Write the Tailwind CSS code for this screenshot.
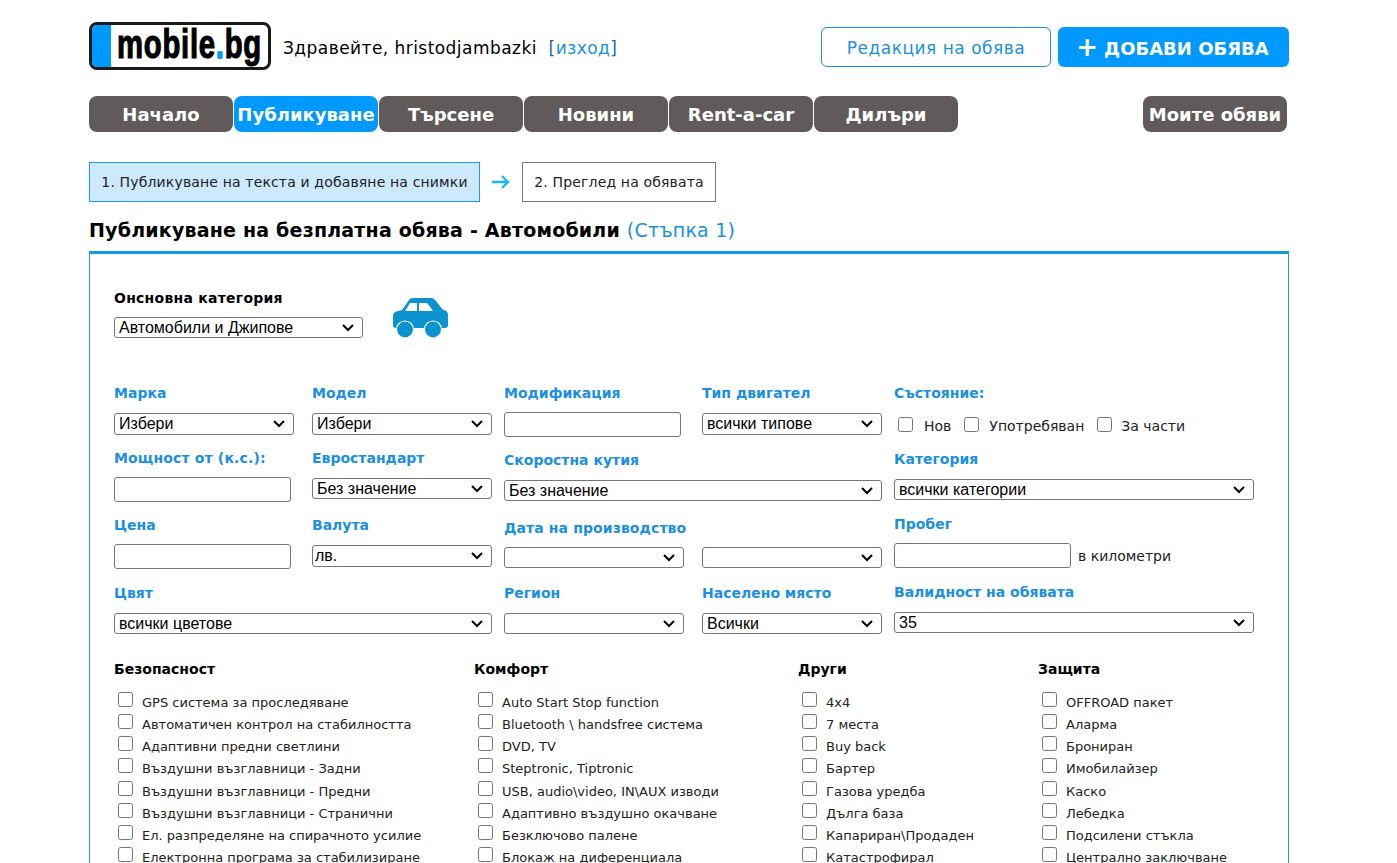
<!DOCTYPE html>
<html lang="en">
<head>
    <meta charset="utf-8"/>
    <title>Публикуване на обява - mobile.bg</title>
    <script src="https://cdn.jsdelivr.net/npm/@tailwindcss/browser@4"></script>
</head>
<body class="bg-white font-['DejaVu_Sans',Verdana,sans-serif] text-black">
<div class="h-[863px] overflow-hidden">
<div class="w-[1200px] ml-[89px]">

    <!-- header -->
    <header class="flex items-start h-[96px]">
        <div class="mt-[22px] w-[182px] h-[48px] border-[3px] border-[#1a1a1a] rounded-[8px] overflow-hidden flex relative">
            <div class="w-[19px] bg-[#0099ff] shrink-0"></div>
            <span class="absolute left-[25px] top-[-6px] origin-left scale-x-[0.715] font-['Liberation_Sans',sans-serif] font-bold text-[41px] leading-[50px] tracking-[1px] whitespace-nowrap [-webkit-text-stroke:1.2px_black]">mobile<span class="text-[#0099ff] [-webkit-text-stroke:1.5px_#0099ff]">.</span>bg</span>
        </div>
        <div class="mt-[37px] ml-[12px] text-[17px] leading-[22px] tracking-[0.45px]">Здравейте, hristodjambazki&nbsp; <span class="text-[#1b6a9c]">[</span><a class="text-[#1a8fe3]">изход</a><span class="text-[#1b6a9c]">]</span></div>
        <a class="mt-[27px] ml-auto w-[230px] h-[40px] pt-[3px] border border-[#1a8fe3] rounded-[6px] text-[#1a8fe3] text-[17px] tracking-[0.5px] flex items-center justify-center">Редакция на обява</a>
        <a class="mt-[27px] ml-[7px] w-[231px] h-[40px] pt-[2px] pr-[2px] bg-[#0099ff] rounded-[6px] text-white text-[18px] font-bold flex items-center justify-center"><span class="text-[26px] leading-none mr-[6px] mt-[-3px]">+</span>ДОБАВИ ОБЯВА</a>
    </header>

    <!-- main nav -->
    <nav class="flex items-start h-[36px] text-white font-bold text-[18px]">
        <a class="w-[144px] h-[36px] mr-[1px] bg-[#605b5a] rounded-[8px] flex items-center justify-center">Начало</a>
        <a class="w-[144px] h-[36px] mr-[1px] bg-[#0099ff] rounded-[8px] flex items-center justify-center">Публикуване</a>
        <a class="w-[144px] h-[36px] mr-[1px] bg-[#605b5a] rounded-[8px] flex items-center justify-center">Търсене</a>
        <a class="w-[144px] h-[36px] mr-[1px] bg-[#605b5a] rounded-[8px] flex items-center justify-center">Новини</a>
        <a class="w-[144px] h-[36px] mr-[1px] bg-[#605b5a] rounded-[8px] flex items-center justify-center">Rent-a-car</a>
        <a class="w-[144px] h-[36px] bg-[#605b5a] rounded-[8px] flex items-center justify-center">Дилъри</a>
        <a class="ml-auto mr-[2px] w-[144px] h-[36px] bg-[#605b5a] rounded-[8px] flex items-center justify-center">Моите обяви</a>
    </nav>

    <!-- steps -->
    <div class="flex items-center mt-[30px] h-[40px] text-[14px] tracking-[0.15px] text-[#222]">
        <div class="w-[391px] h-[40px] bg-[#cce9fd] border border-[#1a9be8] flex items-center justify-center">1. Публикуване на текста и добавяне на снимки</div>
        <svg class="ml-[11px] mr-[11px]" width="20" height="16" viewBox="0 0 20 16" fill="none" stroke="#22b4f0" stroke-width="2.4"><path d="M1 8h16M11 2l6 6-6 6"/></svg>
        <div class="w-[194px] h-[40px] border border-[#777] flex items-center justify-center">2. Преглед на обявата</div>
    </div>

    <h1 class="mt-[16px] h-[33px] text-[19px] leading-[24px] font-bold tracking-[0.2px]">Публикуване на безплатна обява - Автомобили <span class="font-normal text-[#1a8fe3]">(Стъпка 1)</span></h1>

    <!-- form panel -->
    <main class="h-[700px] border border-[#0f9be8] border-t-[3px] px-[24px]">

        <div class="flex h-[122px]">
            <div class="w-[279px] pt-[35px]">
                <div class="text-[14px] tracking-[0.25px] leading-[18px] font-bold">Онсновна категория</div>
                <select class="block mt-[10px] w-[249px] h-[21px] pl-[4px] appearance-none bg-white bg-[url('data:image/svg+xml,%3Csvg%20xmlns=%22http://www.w3.org/2000/svg%22%20width=%2212%22%20height=%228%22%3E%3Cpath%20d=%22M1%201l5%205%205-5%22%20fill=%22none%22%20stroke=%22black%22%20stroke-width=%222%22/%3E%3C/svg%3E')] bg-no-repeat bg-[position:right_8px_center] border border-[#767676] rounded-[3px] font-['Liberation_Sans',sans-serif] text-[16px] leading-[18px]"><option>Автомобили и Джипове</option></select>
            </div>
            <svg class="mt-[44px]" width="55" height="41" viewBox="0 0 55 41" fill="#0a93cf"><path fill-rule="evenodd" d="M0 18q0-4 5-5l4-1 7-10q1-2 4-2h18q3 0 5 3l7 9 1 0q4 1 4 5v10q0 3-3 3H3q-3 0-3-3zM12 13h12V5h-7zM26 5v8h14l-5-7q-1-1-2-1z"/><circle cx="12" cy="31.500" r="8.500" stroke="#fff" stroke-width="1.200"/><circle cx="40" cy="31.500" r="8.500" stroke="#fff" stroke-width="1.200"/></svg>
        </div>

        <!-- fields row 1 -->
        <div class="grid grid-cols-[198px_192px_198px_192px_360px] h-[65px] text-[14px] leading-[18px] font-bold text-[#1a8fe3]">
            <div class="pt-[8px]">Марка<select class="block mt-[11px] w-[180px] h-[22px] pl-[4px] appearance-none bg-white bg-[url('data:image/svg+xml,%3Csvg%20xmlns=%22http://www.w3.org/2000/svg%22%20width=%2212%22%20height=%228%22%3E%3Cpath%20d=%22M1%201l5%205%205-5%22%20fill=%22none%22%20stroke=%22black%22%20stroke-width=%222%22/%3E%3C/svg%3E')] bg-no-repeat bg-[position:right_8px_center] border border-[#767676] rounded-[3px] text-black font-normal font-['Liberation_Sans',sans-serif] text-[16px]"><option>Избери</option></select></div>
            <div class="pt-[8px]">Модел<select class="block mt-[11px] w-[180px] h-[22px] pl-[4px] appearance-none bg-white bg-[url('data:image/svg+xml,%3Csvg%20xmlns=%22http://www.w3.org/2000/svg%22%20width=%2212%22%20height=%228%22%3E%3Cpath%20d=%22M1%201l5%205%205-5%22%20fill=%22none%22%20stroke=%22black%22%20stroke-width=%222%22/%3E%3C/svg%3E')] bg-no-repeat bg-[position:right_8px_center] border border-[#767676] rounded-[3px] text-black font-normal font-['Liberation_Sans',sans-serif] text-[16px]"><option>Избери</option></select></div>
            <div class="pt-[8px]">Модификация<input class="block mt-[10px] w-[177px] h-[25px] border border-[#767676] rounded-[3px] bg-white"/></div>
            <div class="pt-[8px]">Тип двигател<select class="block mt-[11px] w-[180px] h-[22px] pl-[4px] appearance-none bg-white bg-[url('data:image/svg+xml,%3Csvg%20xmlns=%22http://www.w3.org/2000/svg%22%20width=%2212%22%20height=%228%22%3E%3Cpath%20d=%22M1%201l5%205%205-5%22%20fill=%22none%22%20stroke=%22black%22%20stroke-width=%222%22/%3E%3C/svg%3E')] bg-no-repeat bg-[position:right_8px_center] border border-[#767676] rounded-[3px] text-black font-normal font-['Liberation_Sans',sans-serif] text-[16px]"><option>всички типове</option></select></div>
            <div class="pt-[8px]">Състояние:
                <div class="flex items-center mt-[10px] h-[24px] text-[14px] font-normal text-[#222]">
                    <input type="checkbox" class="ml-[4px] w-[15px] h-[15px]"/><span class="ml-[11px] translate-y-[2px]">Нов</span>
                    <input type="checkbox" class="ml-[13px] w-[15px] h-[15px]"/><span class="ml-[10px] translate-y-[2px]">Употребяван</span>
                    <input type="checkbox" class="ml-[13px] w-[15px] h-[15px]"/><span class="ml-[9px] translate-y-[2px]">За части</span>
                </div>
            </div>
        </div>

        <!-- fields row 2 -->
        <div class="grid grid-cols-[198px_192px_390px_360px] h-[67px] text-[14px] leading-[18px] font-bold text-[#1a8fe3]">
            <div class="pt-[8px] tracking-[0.15px]">Мощност от (к.с.):<input class="block mt-[10px] w-[177px] h-[25px] border border-[#767676] rounded-[3px] bg-white"/></div>
            <div class="pt-[8px]">Евростандарт<select class="block mt-[11px] w-[180px] h-[21px] pl-[4px] appearance-none bg-white bg-[url('data:image/svg+xml,%3Csvg%20xmlns=%22http://www.w3.org/2000/svg%22%20width=%2212%22%20height=%228%22%3E%3Cpath%20d=%22M1%201l5%205%205-5%22%20fill=%22none%22%20stroke=%22black%22%20stroke-width=%222%22/%3E%3C/svg%3E')] bg-no-repeat bg-[position:right_8px_center] border border-[#767676] rounded-[3px] text-black font-normal font-['Liberation_Sans',sans-serif] text-[16px]"><option>Без значение</option></select></div>
            <div class="pt-[10px]">Скоростна кутия<select class="block mt-[11px] w-[378px] h-[21px] pl-[4px] appearance-none bg-white bg-[url('data:image/svg+xml,%3Csvg%20xmlns=%22http://www.w3.org/2000/svg%22%20width=%2212%22%20height=%228%22%3E%3Cpath%20d=%22M1%201l5%205%205-5%22%20fill=%22none%22%20stroke=%22black%22%20stroke-width=%222%22/%3E%3C/svg%3E')] bg-no-repeat bg-[position:right_8px_center] border border-[#767676] rounded-[3px] text-black font-normal font-['Liberation_Sans',sans-serif] text-[16px]"><option>Без значение</option></select></div>
            <div class="pt-[9px]">Категория<select class="block mt-[11px] w-[360px] h-[21px] pl-[4px] appearance-none bg-white bg-[url('data:image/svg+xml,%3Csvg%20xmlns=%22http://www.w3.org/2000/svg%22%20width=%2212%22%20height=%228%22%3E%3Cpath%20d=%22M1%201l5%205%205-5%22%20fill=%22none%22%20stroke=%22black%22%20stroke-width=%222%22/%3E%3C/svg%3E')] bg-no-repeat bg-[position:right_8px_center] border border-[#767676] rounded-[3px] text-black font-normal font-['Liberation_Sans',sans-serif] text-[16px]"><option>всички категории</option></select></div>
        </div>

        <!-- fields row 3 -->
        <div class="grid grid-cols-[198px_192px_198px_192px_360px] h-[68px] text-[14px] leading-[18px] font-bold text-[#1a8fe3]">
            <div class="pt-[8px]">Цена<input class="block mt-[10px] w-[177px] h-[25px] border border-[#767676] rounded-[3px] bg-white"/></div>
            <div class="pt-[8px]">Валута<select class="block mt-[11px] w-[180px] h-[22px] pl-[2px] appearance-none bg-white bg-[url('data:image/svg+xml,%3Csvg%20xmlns=%22http://www.w3.org/2000/svg%22%20width=%2212%22%20height=%228%22%3E%3Cpath%20d=%22M1%201l5%205%205-5%22%20fill=%22none%22%20stroke=%22black%22%20stroke-width=%222%22/%3E%3C/svg%3E')] bg-no-repeat bg-[position:right_8px_center] border border-[#767676] rounded-[3px] text-black font-normal font-['Liberation_Sans',sans-serif] text-[16px]"><option>лв.</option></select></div>
            <div class="pt-[11px] tracking-[0.1px]">Дата на производство<select class="block mt-[10px] w-[180px] h-[21px] pl-[4px] appearance-none bg-white bg-[url('data:image/svg+xml,%3Csvg%20xmlns=%22http://www.w3.org/2000/svg%22%20width=%2212%22%20height=%228%22%3E%3Cpath%20d=%22M1%201l5%205%205-5%22%20fill=%22none%22%20stroke=%22black%22%20stroke-width=%222%22/%3E%3C/svg%3E')] bg-no-repeat bg-[position:right_8px_center] border border-[#767676] rounded-[3px]"><option></option></select></div>
            <div class="pt-[29px]"><select class="block mt-[10px] w-[180px] h-[21px] pl-[4px] appearance-none bg-white bg-[url('data:image/svg+xml,%3Csvg%20xmlns=%22http://www.w3.org/2000/svg%22%20width=%2212%22%20height=%228%22%3E%3Cpath%20d=%22M1%201l5%205%205-5%22%20fill=%22none%22%20stroke=%22black%22%20stroke-width=%222%22/%3E%3C/svg%3E')] bg-no-repeat bg-[position:right_8px_center] border border-[#767676] rounded-[3px]"><option></option></select></div>
            <div class="pt-[7px]">Пробег
                <div class="flex items-center mt-[10px] text-[14px] font-normal text-[#222]">
                    <input class="w-[177px] h-[25px] border border-[#767676] rounded-[3px] bg-white"/><span class="ml-[7px]">в километри</span>
                </div>
            </div>
        </div>

        <!-- fields row 4 -->
        <div class="grid grid-cols-[390px_198px_192px_360px] h-[84px] text-[14px] leading-[18px] font-bold text-[#1a8fe3]">
            <div class="pt-[8px]">Цвят<select class="block mt-[11px] w-[378px] h-[21px] pl-[4px] appearance-none bg-white bg-[url('data:image/svg+xml,%3Csvg%20xmlns=%22http://www.w3.org/2000/svg%22%20width=%2212%22%20height=%228%22%3E%3Cpath%20d=%22M1%201l5%205%205-5%22%20fill=%22none%22%20stroke=%22black%22%20stroke-width=%222%22/%3E%3C/svg%3E')] bg-no-repeat bg-[position:right_8px_center] border border-[#767676] rounded-[3px] text-black font-normal font-['Liberation_Sans',sans-serif] text-[16px]"><option>всички цветове</option></select></div>
            <div class="pt-[8px]">Регион<select class="block mt-[11px] w-[180px] h-[21px] pl-[4px] appearance-none bg-white bg-[url('data:image/svg+xml,%3Csvg%20xmlns=%22http://www.w3.org/2000/svg%22%20width=%2212%22%20height=%228%22%3E%3Cpath%20d=%22M1%201l5%205%205-5%22%20fill=%22none%22%20stroke=%22black%22%20stroke-width=%222%22/%3E%3C/svg%3E')] bg-no-repeat bg-[position:right_8px_center] border border-[#767676] rounded-[3px]"><option></option></select></div>
            <div class="pt-[8px]">Населено място<select class="block mt-[11px] w-[180px] h-[21px] pl-[4px] appearance-none bg-white bg-[url('data:image/svg+xml,%3Csvg%20xmlns=%22http://www.w3.org/2000/svg%22%20width=%2212%22%20height=%228%22%3E%3Cpath%20d=%22M1%201l5%205%205-5%22%20fill=%22none%22%20stroke=%22black%22%20stroke-width=%222%22/%3E%3C/svg%3E')] bg-no-repeat bg-[position:right_8px_center] border border-[#767676] rounded-[3px] text-black font-normal font-['Liberation_Sans',sans-serif] text-[16px]"><option>Всички</option></select></div>
            <div class="pt-[7px]">Валидност на обявата<select class="block mt-[11px] w-[360px] h-[21px] pl-[4px] appearance-none bg-white bg-[url('data:image/svg+xml,%3Csvg%20xmlns=%22http://www.w3.org/2000/svg%22%20width=%2212%22%20height=%228%22%3E%3Cpath%20d=%22M1%201l5%205%205-5%22%20fill=%22none%22%20stroke=%22black%22%20stroke-width=%222%22/%3E%3C/svg%3E')] bg-no-repeat bg-[position:right_8px_center] border border-[#767676] rounded-[3px] text-black font-normal font-['Liberation_Sans',sans-serif] text-[16px]"><option>35</option></select></div>
        </div>

        <!-- extras -->
        <div class="grid grid-cols-[360px_324px_240px_1fr] text-[13px] leading-[22.150px] text-[#222]">
            <div>
                <h3 class="font-bold text-black text-[14px] leading-[18px] mb-[14px]">Безопасност</h3>
                <label class="flex h-[22.150px]"><input type="checkbox" class="ml-[4px] mr-[9px] w-[15px] h-[15px]"/>GPS система за проследяване</label>
                <label class="flex h-[22.150px]"><input type="checkbox" class="ml-[4px] mr-[9px] w-[15px] h-[15px]"/>Автоматичен контрол на стабилността</label>
                <label class="flex h-[22.150px]"><input type="checkbox" class="ml-[4px] mr-[9px] w-[15px] h-[15px]"/>Адаптивни предни светлини</label>
                <label class="flex h-[22.150px]"><input type="checkbox" class="ml-[4px] mr-[9px] w-[15px] h-[15px]"/>Въздушни възглавници - Задни</label>
                <label class="flex h-[22.150px]"><input type="checkbox" class="ml-[4px] mr-[9px] w-[15px] h-[15px]"/>Въздушни възглавници - Предни</label>
                <label class="flex h-[22.150px]"><input type="checkbox" class="ml-[4px] mr-[9px] w-[15px] h-[15px]"/>Въздушни възглавници - Странични</label>
                <label class="flex h-[22.150px]"><input type="checkbox" class="ml-[4px] mr-[9px] w-[15px] h-[15px]"/>Ел. разпределяне на спирачното усилие</label>
                <label class="flex h-[22.150px]"><input type="checkbox" class="ml-[4px] mr-[9px] w-[15px] h-[15px]"/>Електронна програма за стабилизиране</label>
            </div>
            <div>
                <h3 class="font-bold text-black text-[14px] leading-[18px] mb-[14px]">Комфорт</h3>
                <label class="flex h-[22.150px]"><input type="checkbox" class="ml-[4px] mr-[9px] w-[15px] h-[15px]"/>Auto Start Stop function</label>
                <label class="flex h-[22.150px]"><input type="checkbox" class="ml-[4px] mr-[9px] w-[15px] h-[15px]"/>Bluetooth \ handsfree система</label>
                <label class="flex h-[22.150px]"><input type="checkbox" class="ml-[4px] mr-[9px] w-[15px] h-[15px]"/>DVD, TV</label>
                <label class="flex h-[22.150px]"><input type="checkbox" class="ml-[4px] mr-[9px] w-[15px] h-[15px]"/>Steptronic, Tiptronic</label>
                <label class="flex h-[22.150px]"><input type="checkbox" class="ml-[4px] mr-[9px] w-[15px] h-[15px]"/>USB, audio\video, IN\AUX изводи</label>
                <label class="flex h-[22.150px]"><input type="checkbox" class="ml-[4px] mr-[9px] w-[15px] h-[15px]"/>Адаптивно въздушно окачване</label>
                <label class="flex h-[22.150px]"><input type="checkbox" class="ml-[4px] mr-[9px] w-[15px] h-[15px]"/>Безключово палене</label>
                <label class="flex h-[22.150px]"><input type="checkbox" class="ml-[4px] mr-[9px] w-[15px] h-[15px]"/>Блокаж на диференциала</label>
            </div>
            <div>
                <h3 class="font-bold text-black text-[14px] leading-[18px] mb-[14px]">Други</h3>
                <label class="flex h-[22.150px]"><input type="checkbox" class="ml-[4px] mr-[9px] w-[15px] h-[15px]"/>4x4</label>
                <label class="flex h-[22.150px]"><input type="checkbox" class="ml-[4px] mr-[9px] w-[15px] h-[15px]"/>7 места</label>
                <label class="flex h-[22.150px]"><input type="checkbox" class="ml-[4px] mr-[9px] w-[15px] h-[15px]"/>Buy back</label>
                <label class="flex h-[22.150px]"><input type="checkbox" class="ml-[4px] mr-[9px] w-[15px] h-[15px]"/>Бартер</label>
                <label class="flex h-[22.150px]"><input type="checkbox" class="ml-[4px] mr-[9px] w-[15px] h-[15px]"/>Газова уредба</label>
                <label class="flex h-[22.150px]"><input type="checkbox" class="ml-[4px] mr-[9px] w-[15px] h-[15px]"/>Дълга база</label>
                <label class="flex h-[22.150px]"><input type="checkbox" class="ml-[4px] mr-[9px] w-[15px] h-[15px]"/>Капариран\Продаден</label>
                <label class="flex h-[22.150px]"><input type="checkbox" class="ml-[4px] mr-[9px] w-[15px] h-[15px]"/>Катастрофирал</label>
            </div>
            <div>
                <h3 class="font-bold text-black text-[14px] leading-[18px] mb-[14px]">Защита</h3>
                <label class="flex h-[22.150px]"><input type="checkbox" class="ml-[4px] mr-[9px] w-[15px] h-[15px]"/>OFFROAD пакет</label>
                <label class="flex h-[22.150px]"><input type="checkbox" class="ml-[4px] mr-[9px] w-[15px] h-[15px]"/>Аларма</label>
                <label class="flex h-[22.150px]"><input type="checkbox" class="ml-[4px] mr-[9px] w-[15px] h-[15px]"/>Брониран</label>
                <label class="flex h-[22.150px]"><input type="checkbox" class="ml-[4px] mr-[9px] w-[15px] h-[15px]"/>Имобилайзер</label>
                <label class="flex h-[22.150px]"><input type="checkbox" class="ml-[4px] mr-[9px] w-[15px] h-[15px]"/>Каско</label>
                <label class="flex h-[22.150px]"><input type="checkbox" class="ml-[4px] mr-[9px] w-[15px] h-[15px]"/>Лебедка</label>
                <label class="flex h-[22.150px]"><input type="checkbox" class="ml-[4px] mr-[9px] w-[15px] h-[15px]"/>Подсилени стъкла</label>
                <label class="flex h-[22.150px]"><input type="checkbox" class="ml-[4px] mr-[9px] w-[15px] h-[15px]"/>Централно заключване</label>
            </div>
        </div>
    </main>
</div>
</div>
</body>
</html>
